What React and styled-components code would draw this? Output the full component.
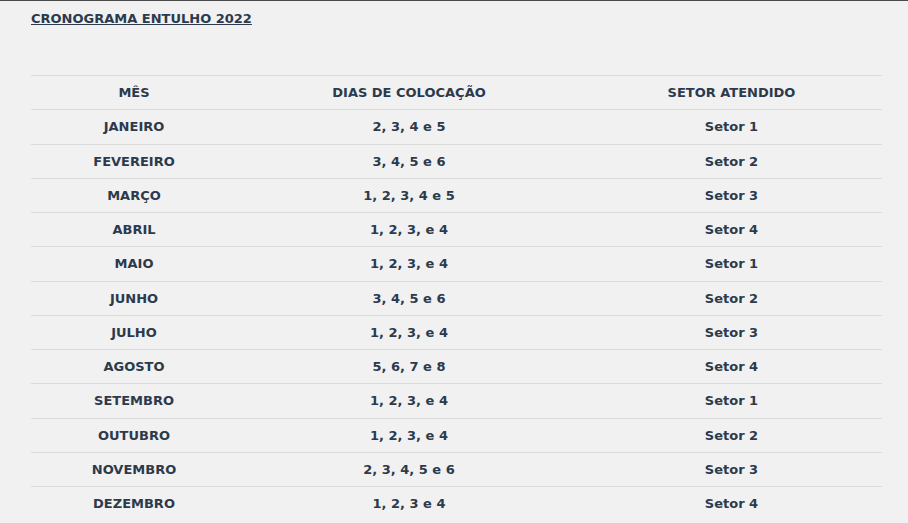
import React from "react";
import styled, { createGlobalStyle } from "styled-components";

const GlobalStyle = createGlobalStyle`
  html, body {
    margin: 0;
    padding: 0;
    background: #f1f1f1;
  }
  body {
    font-family: "DejaVu Sans", Verdana, sans-serif;
    color: #2c3a4c;
  }
`;

const Page = styled.div`
  border-top: 1px solid #4a4a4a;
  padding: 9px 26px 0 31px;
  min-height: 522px;
  box-sizing: border-box;
`;

const Title = styled.h2`
  margin: 0;
  font-size: 13px;
  font-weight: bold;
  line-height: 17px;
  text-decoration: underline;
  color: #2c3a4c;
`;

const Table = styled.table`
  margin-top: 48px;
  width: 851px;
  border-collapse: collapse;
  font-size: 13px;
  font-weight: bold;
`;

const Cell = styled.td`
  text-align: center;
  border-top: 1px solid #dcdcdc;
  height: 33.25px;
  padding: 0;
  width: ${(p) => p.w}px;
`;

const Head = styled(Cell).attrs({ as: "th" })``;

const rows = [
  ["JANEIRO", "2, 3, 4 e 5", "Setor 1"],
  ["FEVEREIRO", "3, 4, 5 e 6", "Setor 2"],
  ["MARÇO", "1, 2, 3, 4 e 5", "Setor 3"],
  ["ABRIL", "1, 2, 3, e 4", "Setor 4"],
  ["MAIO", "1, 2, 3, e 4", "Setor 1"],
  ["JUNHO", "3, 4, 5 e 6", "Setor 2"],
  ["JULHO", "1, 2, 3, e 4", "Setor 3"],
  ["AGOSTO", "5, 6, 7 e 8", "Setor 4"],
  ["SETEMBRO", "1, 2, 3, e 4", "Setor 1"],
  ["OUTUBRO", "1, 2, 3, e 4", "Setor 2"],
  ["NOVEMBRO", "2, 3, 4, 5 e 6", "Setor 3"],
  ["DEZEMBRO", "1, 2, 3 e 4", "Setor 4"],
];

export default function App() {
  return (
    <Page>
      <GlobalStyle />
      <Title>CRONOGRAMA ENTULHO 2022</Title>
      <Table>
        <thead>
          <tr>
            <Head w={206}>MÊS</Head>
            <Head w={344}>DIAS DE COLOCAÇÃO</Head>
            <Head w={301}>SETOR ATENDIDO</Head>
          </tr>
        </thead>
        <tbody>
          {rows.map((r) => (
            <tr key={r[0]}>
              <Cell w={206}>{r[0]}</Cell>
              <Cell w={344}>{r[1]}</Cell>
              <Cell w={301}>{r[2]}</Cell>
            </tr>
          ))}
        </tbody>
      </Table>
    </Page>
  );
}
